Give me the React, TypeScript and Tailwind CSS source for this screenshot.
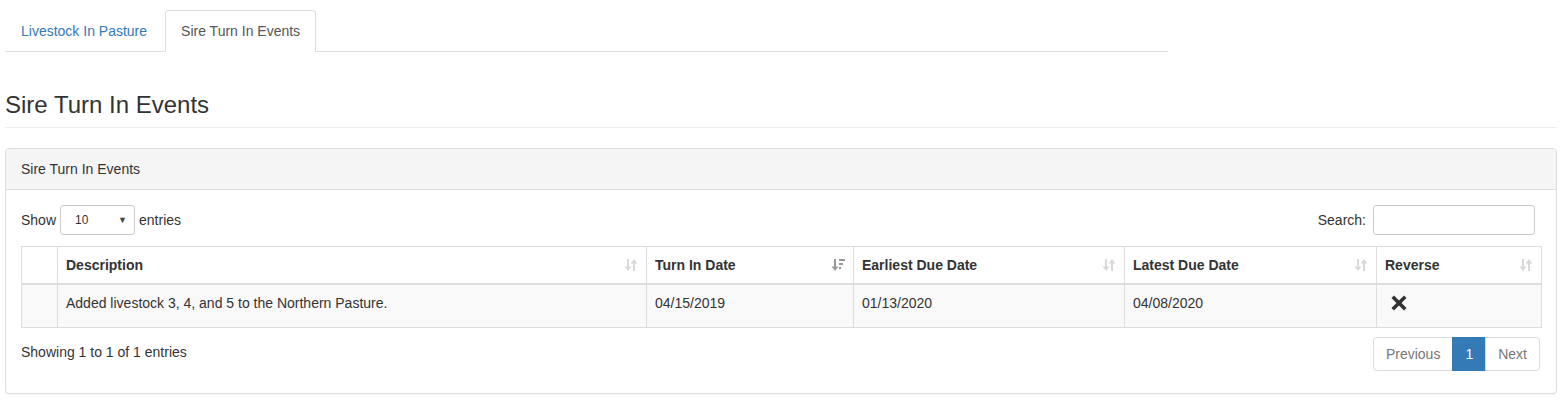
import type { ReactNode } from 'react';

// DataTables-style sire turn-in list, Bootstrap 3 look
const columns = [
  { key: 'blank', label: '', width: 'w-[36px]', sort: 'none' },
  { key: 'description', label: 'Description', width: 'w-[589px]', sort: 'both' },
  { key: 'turnIn', label: 'Turn In Date', width: 'w-[207px]', sort: 'desc' },
  { key: 'earliest', label: 'Earliest Due Date', width: 'w-[271px]', sort: 'both' },
  { key: 'latest', label: 'Latest Due Date', width: 'w-[252px]', sort: 'both' },
  { key: 'reverse', label: 'Reverse', width: 'w-[165px]', sort: 'both' },
] as const;

const rows = [
  {
    id: 1,
    description: 'Added livestock 3, 4, and 5 to the Northern Pasture.',
    turnIn: '04/15/2019',
    earliest: '01/13/2020',
    latest: '04/08/2020',
  },
];

function SortBoth() {
  return (
    <svg width="14" height="14" viewBox="0 0 14 14" className="fill-[#d9d9d9]">
      <rect x="3" y="1" width="2" height="9" />
      <polygon points="0.5,8.5 7.5,8.5 4,13" />
      <rect x="9" y="4" width="2" height="9" />
      <polygon points="6.5,5.5 13.5,5.5 10,1" />
    </svg>
  );
}

function SortDesc() {
  return (
    <svg width="14" height="14" viewBox="0 0 14 14" className="fill-[#999999]">
      <rect x="3" y="1" width="2" height="9" />
      <polygon points="0.5,8.5 7.5,8.5 4,13" />
      <rect x="8" y="1" width="6" height="2" />
      <rect x="8" y="5" width="4" height="2" />
      <rect x="8" y="9" width="2" height="2" />
    </svg>
  );
}

function RemoveIcon() {
  return (
    <svg width="16" height="16" viewBox="0 0 16 16" className="stroke-[#333333]">
      <line x1="3" y1="3" x2="13" y2="13" strokeWidth="3.6" strokeLinecap="square" />
      <line x1="13" y1="3" x2="3" y2="13" strokeWidth="3.6" strokeLinecap="square" />
    </svg>
  );
}

function PageButton({ children, active, className }: { children: ReactNode; active?: boolean; className?: string }) {
  return (
    <span
      className={
        'block border px-[12px] py-[6px] leading-[20px] ' +
        (active ? 'border-[#337ab7] bg-[#337ab7] text-white ' : 'border-[#dddddd] bg-white text-[#777777] ') +
        (className ?? '')
      }
    >
      {children}
    </span>
  );
}

export default function App() {
  return (
    <div className="min-h-[414px] bg-white pl-[5px] pr-[11px] font-['Liberation_Sans',Arial,sans-serif] text-[14px] leading-[20px] text-[#333333]">
      {/* tabs */}
      <ul className="mt-[10px] flex w-[1163px] border-b border-[#dddddd]">
        <li className="-mb-px mr-[2px]">
          <span className="block rounded-t-[4px] border border-transparent px-[15px] py-[10px] text-[#337ab7]">
            Livestock In Pasture
          </span>
        </li>
        <li className="-mb-px mr-[2px]">
          <span className="block rounded-t-[4px] border border-[#dddddd] border-b-white bg-white px-[15px] py-[10px] text-[#555555]">
            Sire Turn In Events
          </span>
        </li>
      </ul>

      {/* page header */}
      <div className="mb-[20px] mt-[40px] border-b border-[#eeeeee] pb-[9px]">
        <h3 className="text-[24px] font-normal leading-[26px]">Sire Turn In Events</h3>
      </div>

      {/* panel */}
      <div className="rounded-[4px] border border-[#dddddd] shadow-[0_1px_1px_rgba(0,0,0,0.05)]">
        <div className="rounded-t-[3px] border-b border-[#dddddd] bg-[#f5f5f5] px-[15px] py-[10px]">
          Sire Turn In Events
        </div>
        <div className="px-[15px] pb-[22px] pt-[15px]">
          <div className="flex h-[35px] items-start justify-between">
            <label className="flex h-[30px] items-center">
              Show
              <span className="ml-[4px] mr-[4px] flex h-[30px] w-[75px] items-center justify-between rounded-[3px] border border-[#cccccc] bg-white pl-[14px] pr-[7px] text-[12px]">
                10
                <span className="text-[9px] text-[#444444]">▼</span>
              </span>
              entries
            </label>
            <label className="flex h-[30px] items-center pr-[6px]">
              Search:
              <span className="ml-[7px] block h-[30px] w-[162px] rounded-[3px] border border-[#cccccc] bg-white" />
            </label>
          </div>

          <table className="mt-[6px] w-full table-fixed border-collapse border border-[#dddddd]">
            <thead>
              <tr>
                {columns.map(c => (
                  <th
                    key={c.key}
                    className={`${c.width} relative border border-b-2 border-[#dddddd] py-[8px] pl-[8px] text-left font-bold ${
                      c.sort === 'none' ? 'pr-[8px]' : 'pr-[30px]'
                    }`}
                  >
                    {c.label}
                    {c.sort !== 'none' && (
                      <span className="absolute right-[8px] top-[11px]">
                        {c.sort === 'desc' ? <SortDesc /> : <SortBoth />}
                      </span>
                    )}
                  </th>
                ))}
              </tr>
            </thead>
            <tbody>
              {rows.map(r => (
                <tr key={r.id} className="bg-[#f9f9f9] align-top">
                  <td className="border border-[#dddddd] p-[8px]" />
                  <td className="border border-[#dddddd] p-[8px]">{r.description}</td>
                  <td className="border border-[#dddddd] p-[8px]">{r.turnIn}</td>
                  <td className="border border-[#dddddd] p-[8px]">{r.earliest}</td>
                  <td className="border border-[#dddddd] p-[8px]">{r.latest}</td>
                  <td className="border border-[#dddddd] px-[8px] pb-[8px] pt-[10px]">
                    <span className="flex h-[24px] items-start pl-[6px]">
                      <RemoveIcon />
                    </span>
                  </td>
                </tr>
              ))}
            </tbody>
          </table>

          <div className="mt-[6px] flex items-start justify-between">
            <div className="pt-[8px]">Showing 1 to 1 of 1 entries</div>
            <div className="mr-px mt-[3px] flex">
              <PageButton className="rounded-l-[4px]">Previous</PageButton>
              <PageButton active className="-ml-px">1</PageButton>
              <PageButton className="-ml-px rounded-r-[4px]">Next</PageButton>
            </div>
          </div>
        </div>
      </div>
    </div>
  );
}
